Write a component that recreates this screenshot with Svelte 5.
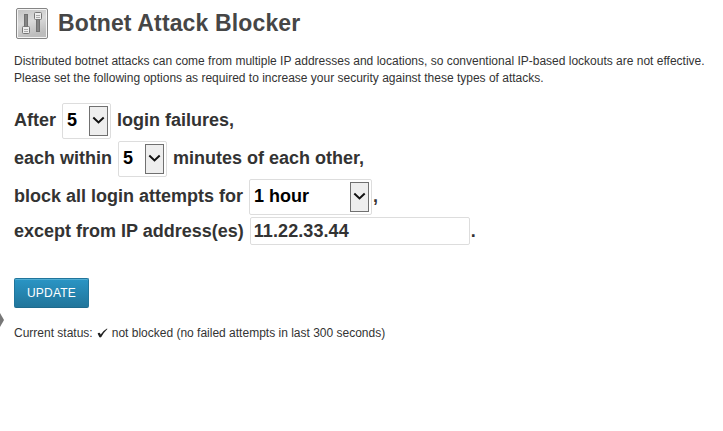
<script lang="ts">

    let failures = "5";
    let minutes = "5";
    let duration = "1 hour";
    let allowed = "11.22.33.44";

    const counts = ["3", "5", "8"];
    const durations = ["1 hour", "6 hours", "24 hours"];

    function update() {
        allowed = allowed.trim();
    }

</script>

{#snippet arrow()}
    <span class="arrow">
        <svg width="13" height="9" viewBox="0 0 13 9"><path d="M1.3 1.6 L6.5 6.4 L11.7 1.6" fill="none" stroke="#111" stroke-width="2" /></svg>
    </span>
{/snippet}

<div class="page">
    <header>
        <svg class="icon" width="32" height="31" viewBox="0 0 32 31">
            <defs>
                <linearGradient id="plate" x1="0" y1="0" x2="0.3" y2="1">
                    <stop offset="0" stop-color="#c4c4c4" />
                    <stop offset="0.5" stop-color="#dadada" />
                    <stop offset="1" stop-color="#bdbdbd" />
                </linearGradient>
            </defs>
            <rect x="0.5" y="0.5" width="31" height="30" rx="1.5" fill="#f4f4f4" stroke="#858585" />
            <rect x="2" y="2" width="28" height="27" fill="url(#plate)" />
            <rect x="8.5" y="6.5" width="3" height="13" fill="#858585" stroke="#707070" />
            <rect x="20.5" y="11.5" width="3" height="12" fill="#858585" stroke="#707070" />
            <rect x="6.5" y="18.5" width="7" height="7" rx="1" fill="#eee" stroke="#777" />
            <rect x="18.5" y="4.5" width="7" height="7" rx="1" fill="#eee" stroke="#777" />
            <path d="M8 21.5h4M8 23.5h4M20 7.5h4M20 9.5h4" stroke="#aaa" />
        </svg>
        <h2>Botnet Attack Blocker</h2>
    </header>

    <p class="intro">Distributed botnet attacks can come from multiple IP addresses and locations, so conventional IP-based lockouts are not effective.<br />Please set the following options as required to increase your security against these types of attacks.</p>

    <div class="options">
        <div class="row">
            <span>After</span>
            <span class="select short">
                <select bind:value={failures}>{#each counts as c}<option>{c}</option>{/each}</select>
                {@render arrow()}
            </span>
            <span class="after">login failures,</span>
        </div>
        <div class="row">
            <span>each within</span>
            <span class="select short">
                <select bind:value={minutes}>{#each counts as c}<option>{c}</option>{/each}</select>
                {@render arrow()}
            </span>
            <span class="after">minutes of each other,</span>
        </div>
        <div class="row">
            <span>block all login attempts for</span>
            <span class="select long">
                <select bind:value={duration}>{#each durations as d}<option>{d}</option>{/each}</select>
                {@render arrow()}
            </span>
            <span class="mark">,</span>
        </div>
        <div class="row last">
            <span>except from IP address(es)</span>
            <input type="text" bind:value={allowed} />
            <span class="mark">.</span>
        </div>
    </div>

    <button on:click={update}>UPDATE</button>

    <div class="status">
        <span>Current status:</span>
        <svg width="11" height="10" viewBox="0 0 11 10"><path d="M0.6 5.6 Q1.8 4.2 2.9 5 L3.7 6.6 Q6 2.6 10 0.4 L10.4 0.9 Q7 4 4.3 9 Q3 9.8 2.3 9 Z" fill="#222" /></svg>
        <span>not blocked (no failed attempts in last 300 seconds)</span>
    </div>

    <i class="pointer"></i>
</div>

<style>
    :global(body) {
        background: #fff;
    }

    .page {
        position: relative;
        box-sizing: border-box;
        height: 431px;
        padding: 8px 0 0 14px;
        overflow: hidden;
        color: #333;
        font: 12px/17px "Liberation Sans", Arial, sans-serif;
        white-space: nowrap;
    }

    header {
        display: flex;
        height: 31px;
        padding-left: 2px;
    }

    h2 {
        margin: 0 0 0 10px;
        color: #464646;
        font-size: 23px;
        letter-spacing: .14px;
        line-height: 30px;
    }

    .intro {
        margin: 14px 0 0;
    }

    .options {
        display: flex;
        flex-direction: column;
        gap: 2px;
        margin-top: 16px;
        font-size: 18px;
        font-weight: bold;
    }

    .row {
        display: flex;
        align-items: center;
        height: 36px;
        line-height: 32px;
    }

    .row > span:first-child {
        margin-right: 6px;
    }

    .row:not(.last) > span:not(.select) {
        padding-bottom: 2px;
    }

    .last {
        height: 28px;
    }

    .select {
        display: flex;
        align-items: center;
        box-sizing: border-box;
        height: 36px;
        padding: 0 2px 0 4px;
        border: 1px solid #ddd;
        border-radius: 2px;
    }

    .short {
        width: 49px;
    }

    .long {
        width: 123px;
    }

    select {
        flex: 1;
        min-width: 0;
        height: 32px;
        margin: 0 0 2px;
        padding: 0;
        border: 0;
        outline: 0;
        appearance: none;
        background: none;
        color: #000;
        font: inherit;
    }

    .arrow {
        display: flex;
        align-items: center;
        justify-content: center;
        box-sizing: border-box;
        width: 19px;
        height: 30px;
        padding-bottom: 2px;
        border: 1px solid #707070;
        background: #eee;
    }

    .after {
        margin-left: 6px;
    }

    .mark {
        margin-left: 1px;
    }

    input {
        box-sizing: border-box;
        width: 220px;
        height: 28px;
        margin: 0;
        padding: 0 3px;
        border: 1px solid #ddd;
        border-radius: 2px;
        outline: 0;
        color: #333;
        font: inherit;
        letter-spacing: .08px;
    }

    button {
        display: block;
        box-sizing: border-box;
        width: 75px;
        height: 30px;
        margin-top: 33px;
        padding: 0;
        border: 1px solid #21759b;
        border-bottom-color: #1e6a8d;
        border-radius: 2px;
        background: linear-gradient(#2a95c5, #21759b);
        box-shadow: inset 0 1px 0 rgba(120, 200, 230, .5);
        color: #fff;
        font: 12px "Liberation Sans", Arial, sans-serif;
        letter-spacing: .2px;
    }

    .status {
        display: flex;
        align-items: center;
        margin-top: 17px;
    }

    .status svg {
        margin: 0 4px 2px;
    }

    .pointer {
        position: absolute;
        left: 0;
        top: 313px;
        border: 7px solid transparent;
        border-left: 4px solid #777;
        border-right: 0;
    }
</style>
